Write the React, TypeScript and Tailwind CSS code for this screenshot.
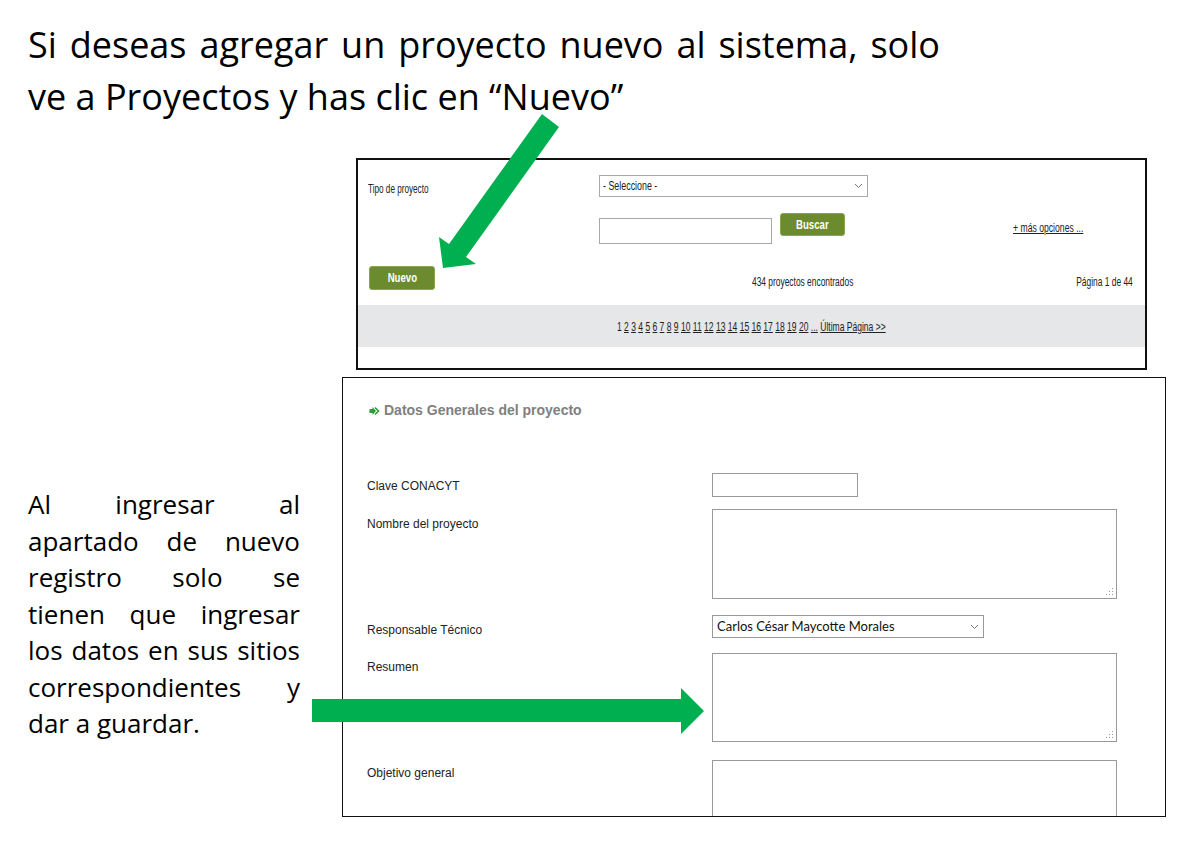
import React from "react";

// the screenshots in the slide are squeezed horizontally, so text is narrowed with scale-x
function Sq({ children, className = "" }: { children: React.ReactNode; className?: string }) {
  return <span className={`inline-block whitespace-nowrap ${className}`}>{children}</span>;
}

function Chevron() {
  return (
    <svg width="9" height="6" viewBox="0 0 9 6" className="shrink-0">
      <path d="M1 1 L4.5 4.5 L8 1" fill="none" stroke="#777" strokeWidth="1" />
    </svg>
  );
}

function Grip() {
  return (
    <svg width="8" height="8" viewBox="0 0 8 8" className="absolute bottom-[3px] right-[3px]">
      <rect x="6" y="0" width="1" height="1" fill="#999" />
      <rect x="6" y="3" width="1" height="1" fill="#999" />
      <rect x="3" y="3" width="1" height="1" fill="#999" />
      <rect x="6" y="6" width="1" height="1" fill="#999" />
      <rect x="3" y="6" width="1" height="1" fill="#999" />
      <rect x="0" y="6" width="1" height="1" fill="#999" />
    </svg>
  );
}

function OliveButton({ label, className }: { label: string; className: string }) {
  return (
    <div
      className={`flex items-center justify-center rounded-[3px] border border-[#8aa552] bg-[#6c8a2e] text-[12px] font-bold text-white ${className}`}
    >
      <Sq className="origin-center scale-x-[0.8]">{label}</Sq>
    </div>
  );
}

function SearchPanel() {
  const pages = Array.from({ length: 19 }, (_, i) => i + 2);
  return (
    <div className="ml-[356px] mt-[35px] flex h-[212px] w-[791px] flex-col border-2 border-[#111] bg-white pt-[15px] font-['Liberation_Sans',Arial,sans-serif] text-[12px] text-[#222]">
      {/* tipo de proyecto */}
      <div className="flex h-[22px] items-center">
        <div className="w-[241px] pl-[10px] pt-[6px]">
          <Sq className="origin-left scale-x-[0.68]">Tipo de proyecto</Sq>
        </div>
        <div className="flex h-[22px] w-[269px] items-center justify-between border border-[#a9a9a9] bg-white pl-[3px] pr-[4px]">
          <Sq className="origin-left scale-x-[0.74]">- Seleccione -</Sq>
          <Chevron />
        </div>
      </div>

      {/* buscar */}
      <div className="mt-[16px] flex items-start">
        <div className="w-[241px]" />
        <div className="mt-[5px] h-[26px] w-[173px] border border-[#a9a9a9] bg-white" />
        <OliveButton label="Buscar" className="ml-[8px] h-[23px] w-[65px]" />
        <div className="ml-[168px] mt-[6px]">
          <Sq className="origin-left scale-x-[0.72] underline">+ más opciones ...</Sq>
        </div>
      </div>

      {/* nuevo + conteo */}
      <div className="mt-[22px] flex h-[24px] items-center">
        <OliveButton label="Nuevo" className="ml-[11px] h-[24px] w-[66px]" />
        <div className="ml-[317px] mt-[8px]">
          <Sq className="origin-left scale-x-[0.7]">434 proyectos encontrados</Sq>
        </div>
        <div className="ml-auto mr-[12px] mt-[8px]">
          <Sq className="origin-right scale-x-[0.7]">Página 1 de 44</Sq>
        </div>
      </div>

      {/* paginacion */}
      <div className="mt-[15px] flex h-[42px] items-center justify-center bg-[#e6e7e8] pt-[2px]">
        <Sq className="origin-center scale-x-[0.71]">
          1{" "}
          {pages.map((p) => (
            <React.Fragment key={p}>
              <span className="underline">{p}</span>{" "}
            </React.Fragment>
          ))}
          <span className="underline">...</span> <span className="underline">Última Página &gt;&gt;</span>
        </Sq>
      </div>
    </div>
  );
}

function Field({ label, pt, children, mt }: { label: string; pt: string; mt: string; children: React.ReactNode }) {
  return (
    <div className={`grid grid-cols-[369px_1fr] items-start ${mt}`}>
      <span className={`pl-[24px] leading-[14px] ${pt}`}>{label}</span>
      {children}
    </div>
  );
}

function Area({ h }: { h: string }) {
  return (
    <div className={`relative w-[405px] ${h}`}>
      <textarea className="block h-full w-full resize-none border border-[#999] outline-none" />
      <Grip />
    </div>
  );
}

function GeneralData() {
  return (
    <div className="mt-[7px] h-[440px] w-[824px] overflow-hidden border border-[#111] bg-white font-['Liberation_Sans',Arial,sans-serif] text-[12px] text-[#222]">
      <div className="flex items-center gap-[4px] pl-[26px] pt-[22px]">
        <svg width="11" height="10" viewBox="0 0 11 10">
          <path d="M0.5 3 H3.5 V1 L7 5 L3.5 9 V7 H0.5 Z" fill="#2f9a3a" />
          <path d="M6 1.5 L9.5 5 L6 8.5" fill="none" stroke="#2f9a3a" strokeWidth="1.6" />
        </svg>
        <span className="text-[14px] font-bold text-[#808080]">Datos Generales del proyecto</span>
      </div>

      <Field label="Clave CONACYT" pt="pt-[6px]" mt="mt-[52px]">
        <div className="h-[24px] w-[146px] border border-[#999]" />
      </Field>

      <Field label="Nombre del proyecto" pt="pt-[8px]" mt="mt-[12px]">
        <Area h="h-[90px]" />
      </Field>

      <Field label="Responsable Técnico" pt="pt-[8px]" mt="mt-[16px]">
        <div className="flex h-[23px] w-[272px] items-center justify-between border border-[#999] pl-[4px] pr-[4px] font-['Lato',sans-serif] text-[13px] text-[#111]">
          <span>Carlos César Maycotte Morales</span>
          <Chevron />
        </div>
      </Field>

      <Field label="Resumen" pt="pt-[7px]" mt="mt-[15px]">
        <Area h="h-[89px]" />
      </Field>

      <Field label="Objetivo general" pt="pt-[6px]" mt="mt-[18px]">
        <div className="h-[90px] w-[405px] border border-[#999]" />
      </Field>
    </div>
  );
}

export default function App() {
  const intro = ["Al ingresar al", "apartado de nuevo", "registro solo se", "tienen que ingresar", "los datos en sus sitios", "correspondientes y"];
  return (
    <div className="relative h-[848px] w-[1182px] overflow-hidden bg-white font-['Open_Sans',sans-serif] text-black">
      {/* titulo */}
      <div className="w-[940px] pl-[28px] pt-[19px] text-[36px] leading-[52px]">
        <div className="text-justify [text-align-last:justify]">Si deseas agregar un proyecto nuevo al sistema, solo</div>
        <div>ve a Proyectos y has clic en “Nuevo”</div>
      </div>

      <SearchPanel />

      <div className="flex">
        <div className="ml-[28px] mr-[42px] w-[272px] shrink-0 pt-[116px] text-[26px] leading-[36.5px]">
          {intro.map((line) => (
            <div key={line} className="whitespace-nowrap text-justify [text-align-last:justify]">
              {line}
            </div>
          ))}
          <div>dar a guardar.</div>
        </div>
        <GeneralData />
      </div>

      {/* flechas */}
      <svg className="pointer-events-none absolute inset-0" width="1182" height="848" viewBox="0 0 1182 848">
        <polygon points="542,114 559,127 466,257 476,264 443,268 439,237 449,244" fill="#00b050" />
        <polygon points="312,699 681,699 681,688 704,711 681,734 681,722 312,722" fill="#00b050" />
      </svg>
    </div>
  );
}
